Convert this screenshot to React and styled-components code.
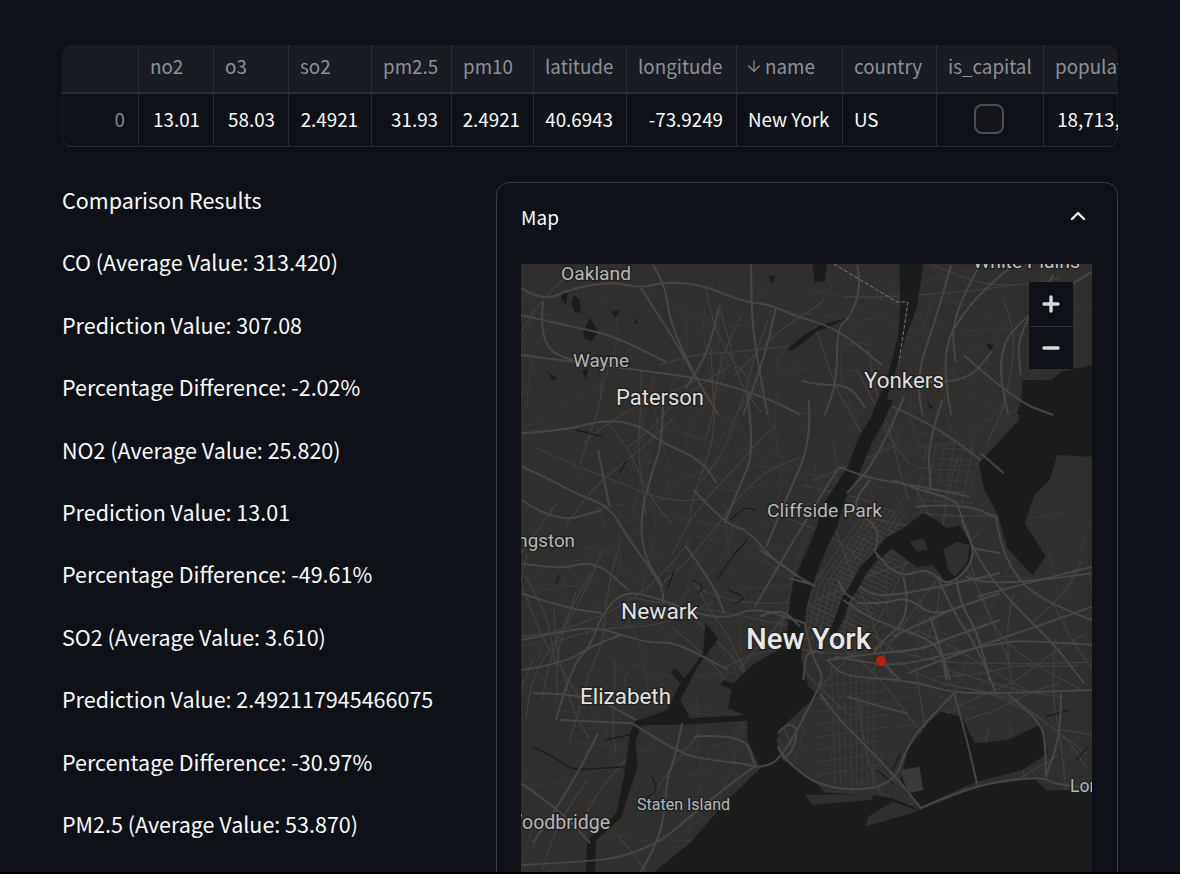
import React from 'react';
import styled, { createGlobalStyle } from 'styled-components';
import { ArrowDown } from 'lucide-react';

const GlobalStyle = createGlobalStyle`
  html, body {
    margin: 0;
    padding: 0;
    background: #000;
  }
  body {
    font-family: "Noto Sans CJK SC", "Source Sans Pro", "Noto Sans", sans-serif;
    color: #fafafa;
  }
`;

const Page = styled.div`
  height: 872px;
  overflow: hidden;
  box-sizing: border-box;
  padding: 45px 62px 0;
  background: #0e1117;
`;

const Table = styled.div`
  display: grid;
  grid-template-columns: 77px 75px 75px 83px 80px 82px 93px 110px 106px 94px 107px 121px;
  grid-template-rows: 49px 53px;
  overflow: hidden;
  height: 102px;
  border-radius: 10px;
  box-shadow: inset 0 -1px 0 #262830, inset 1px 0 0 #1c1e25, inset -1px 0 0 #1c1e25;
`;

const HeadCell = styled.div`
  display: flex;
  align-items: center;
  gap: 2px;
  box-sizing: border-box;
  padding: 0 11px 5px;
  font-size: 18.8px;
  line-height: 26px;
  color: #8f9096;
  background: #1a1c24;
  white-space: nowrap;
  border-right: 1px solid #2b2d35;
  border-bottom: 2px solid #2b2d35;
`;

const SortArrow = styled(ArrowDown)`
  margin-left: -3px;
  flex: none;
`;

const Cell = styled.div`
  display: flex;
  align-items: center;
  justify-content: ${(p) => (p.$right ? 'flex-end' : p.$center ? 'center' : 'flex-start')};
  box-sizing: border-box;
  padding: 0 13px 2px 11px;
  font-size: 18.8px;
  line-height: 26px;
  color: ${(p) => (p.$index ? '#85868c' : '#fafafa')};
  white-space: nowrap;
  border-right: 1px solid #2b2d35;
  border-bottom: 1px solid #2b2d35;
`;

const Checkbox = styled.span`
  display: block;
  width: 30px;
  height: 30px;
  box-sizing: border-box;
  border: 2px solid #4c4e55;
  border-radius: 8px;
  background: #14161c;
`;

const Columns = styled.div`
  display: grid;
  grid-template-columns: 408px 622px;
  column-gap: 26px;
  margin-top: 35px;
  align-items: start;
`;

const Results = styled.div`
  display: flex;
  flex-direction: column;
  gap: 33.9px;
  padding-top: 4px;
`;

const ResultLine = styled.p`
  margin: 0;
  font-size: 21.5px;
  line-height: 28.5px;
  color: #fafafa;
  white-space: nowrap;
`;

const Expander = styled.section`
  box-sizing: border-box;
  height: 760px;
  border: 1px solid #3b3d45;
  border-radius: 13px;
  padding: 0 24px;
`;

const ExpanderHead = styled.div`
  display: flex;
  align-items: center;
  justify-content: space-between;
  box-sizing: border-box;
  height: 81px;
  padding: 0 7px 15px 0;
  font-size: 19px;
  color: #fafafa;
`;

const MapBox = styled.div`
  position: relative;
  width: 571px;
  height: 608px;
  overflow: hidden;
  background: #302f2e;
`;

const MapSvg = styled.svg`
  display: block;
`;

const Zoom = styled.div`
  position: absolute;
  top: 18px;
  right: 19px;
  width: 44px;
  height: 87px;
  display: grid;
  grid-template-rows: 1fr 1fr;
  background: #0e1117;
`;

const ZoomBtn = styled.div`
  display: flex;
  align-items: center;
  justify-content: center;
  & + & {
    border-top: 1px solid #2d2f36;
  }
`;

const columns = ['', 'no2', 'o3', 'so2', 'pm2.5', 'pm10', 'latitude', 'longitude', 'name', 'country', 'is_capital', 'population'];

const lines = [
  'Comparison Results',
  'CO (Average Value: 313.420)',
  'Prediction Value: 307.08',
  'Percentage Difference: -2.02%',
  'NO2 (Average Value: 25.820)',
  'Prediction Value: 13.01',
  'Percentage Difference: -49.61%',
  'SO2 (Average Value: 3.610)',
  'Prediction Value: 2.492117945466075',
  'Percentage Difference: -30.97%',
  'PM2.5 (Average Value: 53.870)',
];

// turns "x,y x,y ..." into a curve through the midpoints
const curve = (s) => {
  const p = s.trim().split(/\s+/).map((v) => v.split(',').map(Number));
  let d = `M${p[0][0]} ${p[0][1]}`;
  for (let i = 1; i < p.length - 1; i++) {
    const mx = (p[i][0] + p[i + 1][0]) / 2;
    const my = (p[i][1] + p[i + 1][1]) / 2;
    d += `Q${p[i][0]} ${p[i][1]} ${mx} ${my}`;
  }
  const e = p[p.length - 1];
  return `${d}L${e[0]} ${e[1]}`;
};

const poly = (s) => `M${s.trim().split(/\s+/).join('L')}Z`;

// street mesh, seeded so it stays the same between runs
const meshRoads = (count, startSeed, minLen, spread) => {
  let seed = startSeed;
  const rnd = () => {
    seed = (seed * 16807) % 2147483647;
    return seed / 2147483647;
  };
  const out = [];
  for (let i = 0; i < count; i++) {
    let x = rnd() * 571;
    let y = rnd() * 608;
    let a = [1.2, 1.9, 0.35, 2.6][i % 4] + (rnd() - 0.5) * 0.5;
    const pts = [`${x.toFixed(1)},${y.toFixed(1)}`];
    const n = 3 + Math.floor(rnd() * 4);
    for (let j = 0; j < n; j++) {
      a += (rnd() - 0.5) * spread;
      const l = minLen + rnd() * 22;
      x += Math.cos(a) * l;
      y += Math.sin(a) * l;
      pts.push(`${x.toFixed(1)},${y.toFixed(1)}`);
    }
    out.push(curve(pts.join(' ')));
  }
  return out;
};

const thinRoads = meshRoads(220, 41, 12, 0.9);
const midRoads = meshRoads(100, 977, 22, 0.6);

// traced from the lower part of the map
const water = [
  // hudson into upper bay
  '975,0 1000,0 975,70 945,130 922,195 905,240 875,300 855,380 825,450 795,540 775,620 768,690 760,770 780,860 805,885 725,965 695,1020 712,1078 655,1105 620,1020 620,950 570,925 580,860 600,830 640,790 700,750 725,690 727,640 740,545 750,520 795,400 825,300 855,250 882,200 912,110 945,50',
  // newark bay and the kills
  '510,670 545,715 490,800 445,900 470,955 620,945 620,962 480,972 420,975 345,975 328,1020 333,1100 310,1180 290,1255 225,1320 222,1422 198,1422 202,1320 278,1240 298,1130 312,1010 325,965 410,930 440,860 505,760',
  // ocean
  '655,1105 712,1080 800,1150 825,1178 950,1185 1000,1195 1072,1230 1220,1160 1370,1135 1400,1170 1521,1170 1521,1422 370,1422 470,1330 560,1210',
  // jamaica bay
  '1040,1050 1095,965 1125,935 1180,950 1215,1030 1300,1020 1385,975 1405,1060 1340,1110 1220,1145 1130,1190 1072,1225 1020,1140',
  // long island sound
  '1340,-60 1521,-60 1521,170 1430,165 1410,240 1370,285 1345,370 1400,470 1365,525 1300,445 1275,345 1240,270 1225,190 1290,110 1330,60',
  // harbor slips
  '560,840 640,880 630,895 550,855',
  '430,805 470,850 455,860 420,820',
];

const creeks = [
  '170,90 210,100 240,110', '285,220 305,180', '575,360 610,320 640,330',
  '540,540 580,470 620,420', '480,540 510,560 490,580', '570,570 620,590 590,610', '120,550 130,525', '410,570 430,510',
  '330,1000 250,1020', '60,1040 130,1080 160,1110 240,1105 300,1100', '370,1130 390,1170 360,1190',
  '1400,950 1460,930', '1020,1060 1000,1110', '960,1110 1000,1150', '1480,1080 1510,1040',
];

const majorLower = [
  '30,200 100,235 170,280 260,320 300,400 400,560 400,610',
  '400,-20 400,120 370,220 340,350 350,470 400,560',
  '30,100 150,90 240,60 330,70 400,130 500,180 540,250',
  '480,270 560,370 620,390 680,470 745,525 800,560',
  '30,720 110,700 220,680 290,705 370,730 430,725 570,810',
  '490,640 560,660 640,620 770,670',
  '30,810 140,790 210,740 290,705',
  '120,960 160,800 210,740 240,640 300,570 400,600 490,640',
  '320,970 440,1060 520,1080 610,1090 655,1105 712,1075 800,880 820,830 790,770 770,670',
  '450,970 430,1080 410,1130 400,1290 340,1422',
  '30,1395 200,1385 300,1370 400,1320 470,1250 600,1130 640,1100',
  '1521,870 1300,880 1160,880 1040,840 870,830 830,780',
  '1521,735 1350,720 1270,730 1120,770 1000,800 850,770',
  '1521,620 1400,670 1220,740 1040,820',
  '1075,1225 1010,1130 860,960 810,880',
  '700,1040 712,1075 820,1170 1000,1165 1040,1030 1100,950 1160,880',
  '1160,880 1190,1000 1220,1150',
  '1070,1225 1220,1150 1400,1130 1410,1150 1521,1165',
  '1400,1130 1400,1020 1380,960 1300,880',
  '1521,520 1400,540 1250,550 1190,530',
  '860,200 920,230 1020,250 1120,270 1200,290',
  '1180,360 1220,480 1320,620 1420,730 1500,850',
  '1270,350 1280,440 1340,560 1430,620 1521,660',
  '1220,590 1350,550 1521,500',
  '1120,540 1160,640 1220,740 1270,880',
  '700,1000 725,965 755,990 735,1060 712,1075',
  '1060,320 1180,310 1270,350',
  '620,-20 640,150 600,260 560,370',
  '780,0 790,120 720,300 670,440',
  '1030,-10 960,180 880,280',
  '1130,0 1090,130 1100,270',
  '1230,160 1290,220',
  '30,490 130,510 220,480 310,570',
  '460,440 530,550 560,640',
  '640,620 720,460 790,330 860,200',
  '480,1010 610,1000 640,1095',
  '230,150 260,320',
  '130,960 320,970',
  '30,300 120,370 240,330',
  '30,580 130,620 240,640',
  '60,880 200,880 330,960',
  '230,1000 180,1120 60,1330',
  '1000,20 1100,70 1230,180',
  '1440,880 1440,1000 1400,1130',
  '880,890 1000,930 1040,940',
  '30,1150 130,1230 210,1330',
];

const majorUpper = [
  '76,340 130,380 200,340 300,320 370,340 430,320 520,330 620,380 690,390 740,420 850,460 960,570',
  '400,270 430,330 440,440 500,600 560,720',
  '130,380 120,500 190,560 320,560',
  '370,340 450,490 500,600',
  '640,270 640,400 650,520 680,720',
  '700,400 680,520 620,720',
  '900,270 910,340 880,430 850,460 850,620 820,720',
  '1060,720 1040,620 1090,440 1130,270',
  '1130,720 1100,540 1170,390 1280,270',
  '1270,720 1230,540 1330,400 1475,290',
  '76,540 200,560 400,590 560,620 700,680 760,720',
  '1040,620 1160,630 1230,530',
  '1160,540 1290,680 1380,720',
  '765,618 800,630 880,630 920,700',
  '1200,270 1130,420 1140,560',
  '1380,300 1290,470 1300,600',
  '76,420 180,450 300,480 430,560',
  '560,400 540,520 480,640',
];

const lakesUpper = [
  '205,360 220,375 222,415 208,410 200,385',
  '228,470 245,428 265,470 250,498 232,490',
  '298,410 320,405 305,430',
  '354,425 365,450 355,445',
  '790,267 825,267 820,320 795,322',
  '682,305 700,300 692,328',
  '178,350 190,355 186,390 174,370',
  '730,520 770,480 810,450 880,428 850,445 800,470 760,510 735,528',
  '1215,505 1235,510 1225,528',
  '140,590 165,610 155,618',
  '225,590 240,580 235,612',
  '1070,680 1085,695 1078,702',
  '1290,720 1300,680 1350,640 1400,590 1475,570 1475,720',
];

// the east river and flushing bay, traced at 3x around manhattan
const midtownWater = [
  '345,215 375,175 430,145 490,100 520,115 560,145 600,135 620,170 640,200 625,250 585,300 555,305 520,255 470,260 440,240 395,205 365,235',
  '345,215 352,240 320,280 295,325 268,365 250,420 225,470 205,470 225,410 245,360 275,305 305,255',
];

const midtownLand = [
  '450,185 490,175 505,210 470,215',
  '550,210 590,185 630,195 620,250 585,290 565,270',
];

const midtownRoads = [
  '345,215 380,260 430,290 500,265 550,310 590,300 635,250 640,200 600,100 590,60 480,30 400,0',
  '300,320 330,350 440,340 560,315 720,280',
  '290,370 380,370 440,350 520,410 630,370 720,340',
  '200,540 330,520 480,510 550,480 720,420',
  '250,360 320,410 400,440 540,490 560,600',
  '430,290 445,350 430,430 370,480 340,520',
  '510,410 540,500 570,600',
  '590,300 600,370 650,450 690,600',
  '370,550 420,600',
  '400,470 480,430 600,380',
  '115,290 60,250 0,210',
  '640,205 720,220',
  '90,295 160,315',
  '285,360 250,340 235,300',
  '0,410 60,380 120,440',
  '190,520 140,500 130,600',
  '300,100 360,140 345,215',
  '330,0 280,60 300,100',
];

const manhattan = (() => {
  // avenues run along the island, streets cross them
  const out = [];
  for (let i = 0; i < 8; i++) {
    const o = i * 6;
    out.push(`M${800 + o} 640L${813 + o} 585L${866 + o} 510`);
  }
  for (let i = 0; i < 26; i++) {
    const t = i / 25;
    const x = 806 + 62 * t;
    const y = 620 - 105 * t;
    out.push(`M${x} ${y}L${x + 52} ${y + 24}`);
  }
  return out;
})();

const brooklyn = (() => {
  const out = [];
  for (let i = 0; i < 8; i++) {
    out.push(`M${840 + i * 16} 800L${850 + i * 14} 1160`);
    out.push(`M${810 - i * 3} ${860 + i * 38}L${1000 - i * 4} ${830 + i * 38}`);
  }
  for (let i = 0; i < 6; i++) {
    out.push(`M${1090 + i * 24} 130L${1060 + i * 24} 320`);
    out.push(`M${1060} ${140 + i * 32}L${1210} ${150 + i * 32}`);
  }
  return out;
})();

const labels = [
  { t: 'White Plains', x: 973, y: 268, w: 107, s: 19, c: '#c4c4c4' },
  { t: 'Oakland', x: 561, y: 280, w: 70, s: 19, c: '#b6b6b6' },
  { t: 'Wayne', x: 573, y: 367, w: 56, s: 19, c: '#b6b6b6' },
  { t: 'Paterson', x: 616, y: 405, w: 88, s: 22, c: '#dedede' },
  { t: 'Yonkers', x: 864, y: 388, w: 80, s: 22, c: '#dedede' },
  { t: 'Cliffside Park', x: 767, y: 517, w: 115, s: 19, c: '#b6b6b6' },
  { t: 'Kingston', x: 501, y: 547, w: 74, s: 19, c: '#b6b6b6' },
  { t: 'Newark', x: 621, y: 619, w: 77, s: 22, c: '#e2e2e2' },
  { t: 'New York', x: 746, y: 649, w: 125, s: 29, c: '#e8e8e8', b: 500 },
  { t: 'Elizabeth', x: 580, y: 704, w: 91, s: 22, c: '#e2e2e2' },
  { t: 'Staten Island', x: 637, y: 810, w: 93, s: 16, c: '#b6b6b6' },
  { t: 'Woodbridge', x: 505, y: 829, w: 105, s: 20, c: '#b6b6b6' },
  { t: 'Long Beach', x: 1070, y: 792, w: 92, s: 19, c: '#b6b6b6' },
];

const lower = 'translate(510 400) scale(0.3827 0.3333)';
const upper = 'translate(490 175) scale(0.4082 0.3333)';
const midtown = 'translate(760 480) scale(0.3333)';

const MapDrawing = () => (
  <MapSvg width="571" height="608" viewBox="521 264 571 608">
    <rect x="521" y="264" width="571" height="608" fill="#302f2e" />
    <g transform="translate(521 264)" fill="none" stroke="#3b3a39" strokeWidth="0.8">
      {thinRoads.map((d, i) => <path key={i} d={d} />)}
    </g>
    <g transform="translate(521 264)" fill="none" stroke="#413f3e" strokeWidth="1.3" strokeLinejoin="round">
      {midRoads.map((d, i) => <path key={i} d={d} />)}
    </g>
    <g fill="none" stroke="#434241" strokeWidth="0.9">
      {manhattan.map((d, i) => <path key={i} d={d} />)}
    </g>
    <g transform={lower} fill="none" stroke="#3e3d3c" strokeWidth="0.8">
      {brooklyn.map((d, i) => <path key={i} d={d} vectorEffect="non-scaling-stroke" />)}
    </g>
    <g transform={lower} fill="#1b1c1c">
      {water.map((d, i) => <path key={i} d={poly(d)} />)}
    </g>
    <g transform={midtown}>
      {midtownWater.map((d, i) => <path key={i} d={poly(d)} fill="#1b1c1c" />)}
      {midtownLand.map((d, i) => <path key={i} d={poly(d)} fill="#302f2e" />)}
    </g>
    <g transform={lower} fill="none" stroke="#1b1c1c" strokeWidth="1.4">
      {creeks.map((d, i) => <path key={i} d={curve(d)} vectorEffect="non-scaling-stroke" />)}
    </g>
    <g transform={upper} fill="#1b1c1c">
      {lakesUpper.map((d, i) => <path key={i} d={poly(d)} />)}
      <path d={poly('1003,267 1062,267 1045,400 1020,480 985,620 960,720 935,720 975,600 1000,480 1005,380')} />
    </g>
    <g transform={upper} fill="none" stroke="#474645" strokeWidth="2" strokeLinejoin="round">
      {majorUpper.map((d, i) => <path key={i} d={curve(d)} vectorEffect="non-scaling-stroke" />)}
    </g>
    <g transform={lower} fill="none" stroke="#474645" strokeWidth="2" strokeLinejoin="round">
      {majorLower.map((d, i) => <path key={i} d={curve(d)} vectorEffect="non-scaling-stroke" />)}
    </g>
    <g transform={midtown} fill="none" stroke="#494847" strokeWidth="2" strokeLinejoin="round">
      {midtownRoads.map((d, i) => <path key={i} d={curve(d)} vectorEffect="non-scaling-stroke" />)}
    </g>
    <g transform={lower}>
      <path d={poly('930,1280 1070,1232 1000,1205 935,1250')} fill="#302f2e" />
      <path d={poly('770,1185 950,1182 945,1200 790,1215')} fill="#302f2e" />
      <path d={poly('1020,1110 1070,1100 1080,1170 1040,1180')} fill="#3a3938" />
    </g>
    <path d="M834 264L897 302L908 302L899 362" fill="none" stroke="#7c7b7a" strokeWidth="1" strokeDasharray="4 2" />
    {labels.map((l) => (
      <text
        key={l.t}
        x={l.x}
        y={l.y}
        textLength={l.w}
        lengthAdjust="spacingAndGlyphs"
        fontFamily="Roboto, sans-serif"
        fontSize={l.s}
        fontWeight={l.b || 400}
        fill={l.c}
        stroke="#1f1f1f"
        strokeWidth="2.5"
        paintOrder="stroke"
      >
        {l.t}
      </text>
    ))}
    <circle cx="881" cy="661" r="5" fill="#b8200f" />
  </MapSvg>
);

export default function App() {
  return (
    <Page>
      <GlobalStyle />
      <Table>
        {columns.map((c) => (
          <HeadCell key={c}>
            {c === 'name' && <SortArrow size={18} strokeWidth={1.6} />}
            {c}
          </HeadCell>
        ))}
        <Cell $right $index>0</Cell>
        <Cell $right>13.01</Cell>
        <Cell $right>58.03</Cell>
        <Cell $right>2.4921</Cell>
        <Cell $right>31.93</Cell>
        <Cell $right>2.4921</Cell>
        <Cell $right>40.6943</Cell>
        <Cell $right>-73.9249</Cell>
        <Cell>New York</Cell>
        <Cell>US</Cell>
        <Cell $center><Checkbox /></Cell>
        <Cell $right>18,713,220</Cell>
      </Table>
      <Columns>
        <Results>
          {lines.map((l, i) => <ResultLine key={i}>{l}</ResultLine>)}
        </Results>
        <Expander>
          <ExpanderHead>
            Map
            <svg width="16" height="10" viewBox="0 0 16 10" fill="none" stroke="#fafafa" strokeWidth="2.4" strokeLinecap="round" strokeLinejoin="round">
              <path d="M2 8l6-6 6 6" />
            </svg>
          </ExpanderHead>
          <MapBox>
            <MapDrawing />
            <Zoom>
              <ZoomBtn>
                <svg width="18" height="18" viewBox="0 0 18 18" stroke="#d9d9d9" strokeWidth="3.4" strokeLinecap="round">
                  <path d="M9 2v14M2 9h14" />
                </svg>
              </ZoomBtn>
              <ZoomBtn>
                <svg width="18" height="18" viewBox="0 0 18 18" stroke="#d9d9d9" strokeWidth="3.4" strokeLinecap="round">
                  <path d="M2 9h14" />
                </svg>
              </ZoomBtn>
            </Zoom>
          </MapBox>
        </Expander>
      </Columns>
    </Page>
  );
}
